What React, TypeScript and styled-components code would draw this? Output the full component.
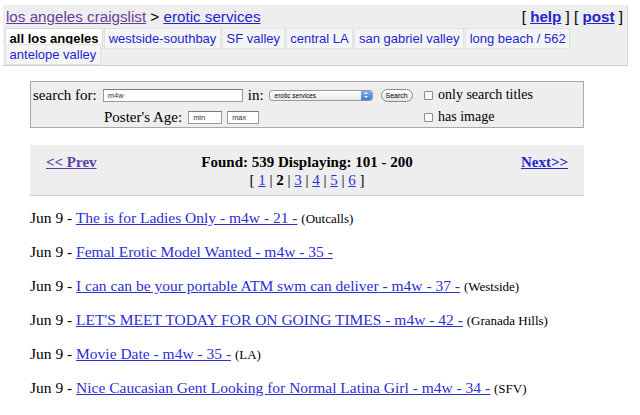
import React from "react";
import styled, { createGlobalStyle } from "styled-components";

const Global = createGlobalStyle`
  html, body { margin: 0; padding: 0; background: #fff; }
  body { font-family: "Liberation Serif", "Times New Roman", serif; color: #000; }
  a { color: #2e2ed2; }
`;

const Page = styled.div`
  width: 640px;
  padding: 5px 0 0 3px;
  box-sizing: border-box;
`;

const Header = styled.div`
  width: 625px;
  background: #eeeeee;
  border-right: 1px solid #dcdcdc;
  border-bottom: 1px solid #cfcfcf;
  box-sizing: border-box;
  padding: 2px 4px 2px 2px;
  font-family: "Liberation Sans", Arial, sans-serif;
`;

const TitleRow = styled.div`
  display: flex;
  justify-content: space-between;
  align-items: baseline;
  font-size: 15.2px;
  line-height: 20px;
  height: 21px;
  padding-left: 1px;
`;

const Crumb = styled.a<{ $visited?: boolean }>`
  color: ${(p) => (p.$visited ? "#6a3d9a" : "#2424d0")};
  text-decoration: underline;
`;

const HelpLinks = styled.div`
  font-size: 15.2px;
  color: #000;
  a { font-weight: bold; color: #2424d0; }
`;

const Tabs = styled.div`
  font-size: 13px;
  line-height: 16px;
  padding: 3px 0 0 0;
  word-spacing: -3.6px;
`;

const Tab = styled.a<{ $active?: boolean }>`
  display: inline;
  padding: 2px 3.6px 2px 3.6px;
  margin-right: 1px;
  word-spacing: normal;
  background: ${(p) => (p.$active ? "#fff" : "#f5f5f5")};
  border: 1px solid ${(p) => (p.$active ? "#dadada" : "#e2e2e2")};
  color: ${(p) => (p.$active ? "#000" : "#2424d0")};
  font-weight: ${(p) => (p.$active ? "bold" : "normal")};
  text-decoration: none;
  white-space: nowrap;
`;

const SearchBox = styled.div`
  margin: 15px 0 0 27px;
  width: 554px;
  height: 47px;
  box-sizing: border-box;
  background: #eeeeee;
  border: 1px solid #a9a9a9;
  display: grid;
  grid-template-columns: 391px 1fr;
  grid-template-rows: 22px 22px;
  align-items: center;
  padding: 2px 0 0 2px;
  font-size: 15px;
`;

const Row = styled.div<{ $indent?: number }>`
  display: flex;
  align-items: center;
  padding-left: ${(p) => p.$indent || 0}px;
`;

const Label = styled.span<{ $gap?: number }>`
  margin-right: ${(p) => p.$gap ?? 6}px;
  white-space: nowrap;
`;

const TextInput = styled.div<{ $w: number }>`
  width: ${(p) => p.$w}px;
  height: 13px;
  box-sizing: border-box;
  background: #fff;
  border: 1px solid #9a9a9a;
  border-top-color: #7a7a7a;
  font-family: "Liberation Sans", Arial, sans-serif;
  font-size: 7.5px;
  line-height: 11px;
  padding-left: 4px;
  color: #333;
  margin-right: 5px;
`;

const Select = styled.div`
  width: 104px;
  height: 11px;
  box-sizing: border-box;
  border: 1px solid #9a9a9a;
  border-radius: 3px;
  background: linear-gradient(#fff, #e9e9e9);
  display: flex;
  align-items: center;
  justify-content: space-between;
  font-family: "Liberation Sans", Arial, sans-serif;
  font-size: 6.5px;
  padding-left: 5px;
  margin-right: 8px;
  overflow: hidden;
`;

const SelectArrow = styled.div`
  width: 11px;
  height: 9px;
  background: linear-gradient(#7fb0f0, #3b78d8);
  border-radius: 0 2px 2px 0;
  display: flex;
  align-items: center;
  justify-content: center;
`;

const Button = styled.div`
  height: 11px;
  padding: 0 4px;
  border: 1px solid #8a8a8a;
  border-radius: 7px;
  background: linear-gradient(#fff, #e6e6e6);
  font-family: "Liberation Sans", Arial, sans-serif;
  font-size: 7px;
  line-height: 11px;
`;

const Check = styled.div`
  display: flex;
  align-items: center;
  font-size: 14px;
  white-space: nowrap;
`;

const Box = styled.span`
  display: inline-block;
  width: 7px;
  height: 7px;
  border: 1px solid #8a8a8a;
  border-radius: 1px;
  background: #fafafa;
  margin-right: 5px;
`;

const PagerBox = styled.div`
  margin: 17px 0 0 27px;
  width: 554px;
  height: 51px;
  box-sizing: border-box;
  background: #eeeeee;
  border-bottom: 1px solid #cfcfcf;
  display: grid;
  grid-template-columns: 120px 1fr 120px;
  padding-top: 8px;
  font-size: 15px;
  font-weight: bold;
  line-height: 18px;
`;

const PrevLink = styled.a`
  color: #5b3ea8;
  padding-left: 16px;
`;

const NextLink = styled.a`
  color: #2424d0;
  text-align: right;
  padding-right: 16px;
`;

const Center = styled.div`
  text-align: center;
`;

const Pages = styled.div`
  font-weight: normal;
  b { font-weight: bold; }
  a { color: #2e2ed2; }
`;

const List = styled.div`
  margin: 13px 0 0 27px;
`;

const Item = styled.p`
  margin: 0;
  height: 34px;
  font-size: 15.5px;
  line-height: 18px;
  white-space: nowrap;
`;

const Loc = styled.small`
  font-size: 13px;
  line-height: 0;
`;

const listings: [string, string?][] = [
  ["The is for Ladies Only - m4w - 21 -", "(Outcalls)"],
  ["Femal Erotic Model Wanted - m4w - 35 -"],
  ["I can can be your portable ATM swm can deliver - m4w - 37 -", "(Westside)"],
  ["LET'S MEET TODAY FOR ON GOING TIMES - m4w - 42 -", "(Granada Hills)"],
  ["Movie Date - m4w - 35 -", "(LA)"],
  ["Nice Caucasian Gent Looking for Normal Latina Girl - m4w - 34 -", "(SFV)"],
];

const tabs = [
  "westside-southbay",
  "SF valley",
  "central LA",
  "san gabriel valley",
  "long beach / 562",
  "antelope valley",
];

export default function App() {
  return (
    <Page>
      <Global />
      <Header>
        <TitleRow>
          <span>
            <Crumb $visited href="#">los angeles craigslist</Crumb> &gt;{" "}
            <Crumb href="#">erotic services</Crumb>
          </span>
          <HelpLinks>
            [ <a href="#">help</a> ] [ <a href="#">post</a> ]
          </HelpLinks>
        </TitleRow>
        <Tabs>
          <Tab $active>all los angeles</Tab>
          {tabs.map((t) => (
            <React.Fragment key={t}>
              {" "}
              <Tab href="#">{t}</Tab>
            </React.Fragment>
          ))}
        </Tabs>
      </Header>

      <SearchBox>
        <Row>
          <Label>search for:</Label>
          <TextInput $w={140}>m4w</TextInput>
          <Label $gap={5}>in:</Label>
          <Select>
            <span>erotic services</span>
            <SelectArrow>
              <svg width="6" height="8" viewBox="0 0 6 8">
                <path d="M1 3 L3 1 L5 3 Z M1 5 L3 7 L5 5 Z" fill="#fff" />
              </svg>
            </SelectArrow>
          </Select>
          <Button>Search</Button>
        </Row>
        <Check>
          <Box />
          only search titles
        </Check>
        <Row $indent={71}>
          <Label>Poster's Age:</Label>
          <TextInput $w={34}>min</TextInput>
          <TextInput $w={32}>max</TextInput>
        </Row>
        <Check>
          <Box />
          has image
        </Check>
      </SearchBox>

      <PagerBox>
        <PrevLink href="#">&lt;&lt; Prev</PrevLink>
        <Center>
          <div>Found: 539 Displaying: 101 - 200</div>
          <Pages>
            [ <a href="#">1</a> | <b>2</b> | <a href="#">3</a> | <a href="#">4</a> |{" "}
            <a href="#">5</a> | <a href="#">6</a> ]
          </Pages>
        </Center>
        <NextLink href="#">Next&gt;&gt;</NextLink>
      </PagerBox>

      <List>
        {listings.map(([title, loc], i) => (
          <Item key={i}>
            Jun 9 - <a href="#">{title}</a> {loc && <Loc>{loc}</Loc>}
          </Item>
        ))}
      </List>
    </Page>
  );
}
